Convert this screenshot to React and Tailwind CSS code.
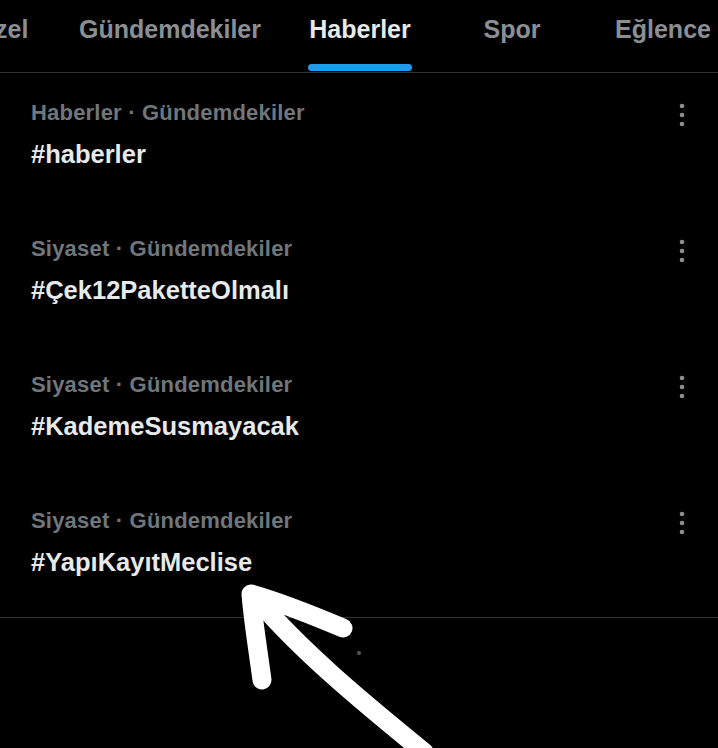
import React from "react";

const tabs = [
  { label: "Özel", w: "w-[146px]" },
  { label: "Gündemdekiler", w: "w-[190px]" },
  { label: "Haberler", w: "w-[190px]", active: true },
  { label: "Spor", w: "w-[114px]" },
  { label: "Eğlence", w: "w-[188px]" },
];

const items = [
  { meta: "Haberler · Gündemdekiler", title: "#haberler" },
  { meta: "Siyaset · Gündemdekiler", title: "#Çek12PaketteOlmalı" },
  { meta: "Siyaset · Gündemdekiler", title: "#KademeSusmayacak" },
  { meta: "Siyaset · Gündemdekiler", title: "#YapıKayıtMeclise" },
];

function Dots() {
  return (
    <svg width="8" height="24" viewBox="0 0 8 24" className="mt-[2px]">
      <circle cx="4" cy="3" r="2.3" fill="#8b8f93" />
      <circle cx="4" cy="12" r="2.3" fill="#8b8f93" />
      <circle cx="4" cy="21" r="2.3" fill="#8b8f93" />
    </svg>
  );
}

export default function App() {
  return (
    <div className="relative w-[718px] h-[748px] bg-black overflow-hidden font-['Liberation_Sans',Arial,sans-serif]">
      <div className="flex h-[73px] border-b border-[#2f3336] ml-[-71px] shrink-0">
        {tabs.map((t) => (
          <div key={t.label} className={`${t.w} shrink-0 flex flex-col items-center`}>
            <div className="relative h-full flex flex-col items-center">
              <span
                className={`mt-[13px] text-[25px] leading-[32px] font-bold ${
                  t.active ? "text-[#e7e9ea]" : "text-[#8b8f93]"
                }`}
              >
                {t.label}
              </span>
              {t.active && (
                <div className="absolute bottom-[1px] -left-[1px] -right-[1px] h-[7px] rounded-full bg-[#1d9bf0]" />
              )}
            </div>
          </div>
        ))}
      </div>
      <div className="border-b border-[#2f3336]">
        {items.map((it, i) => (
          <div key={i} className="flex pl-[31px] pr-[32px] pt-[28px] pb-[41px]">
            <div className="flex-1 flex flex-col">
              <span className="text-[22px] leading-[24px] font-bold tracking-[0.2px] text-[#71767b]">{it.meta}</span>
              <span className="mt-[15px] text-[25.5px] leading-[28px] font-bold text-[#e7e9ea]">{it.title}</span>
            </div>
            <Dots />
          </div>
        ))}
      </div>
      <div className="absolute left-[357px] top-[651px] w-[4px] h-[4px] rounded-full bg-[#555]" />
      <svg className="absolute inset-0 pointer-events-none" width="718" height="748" viewBox="0 0 718 748">
        <g fill="none" stroke="#ffffff" strokeWidth="19" strokeLinecap="round" strokeLinejoin="round">
          <path d="M424 752 C 360 700, 300 650, 256 598" />
          <path d="M262 680 C 258 650, 253 620, 251 594 C 280 602, 312 615, 343 628" />
        </g>
      </svg>
    </div>
  );
}
